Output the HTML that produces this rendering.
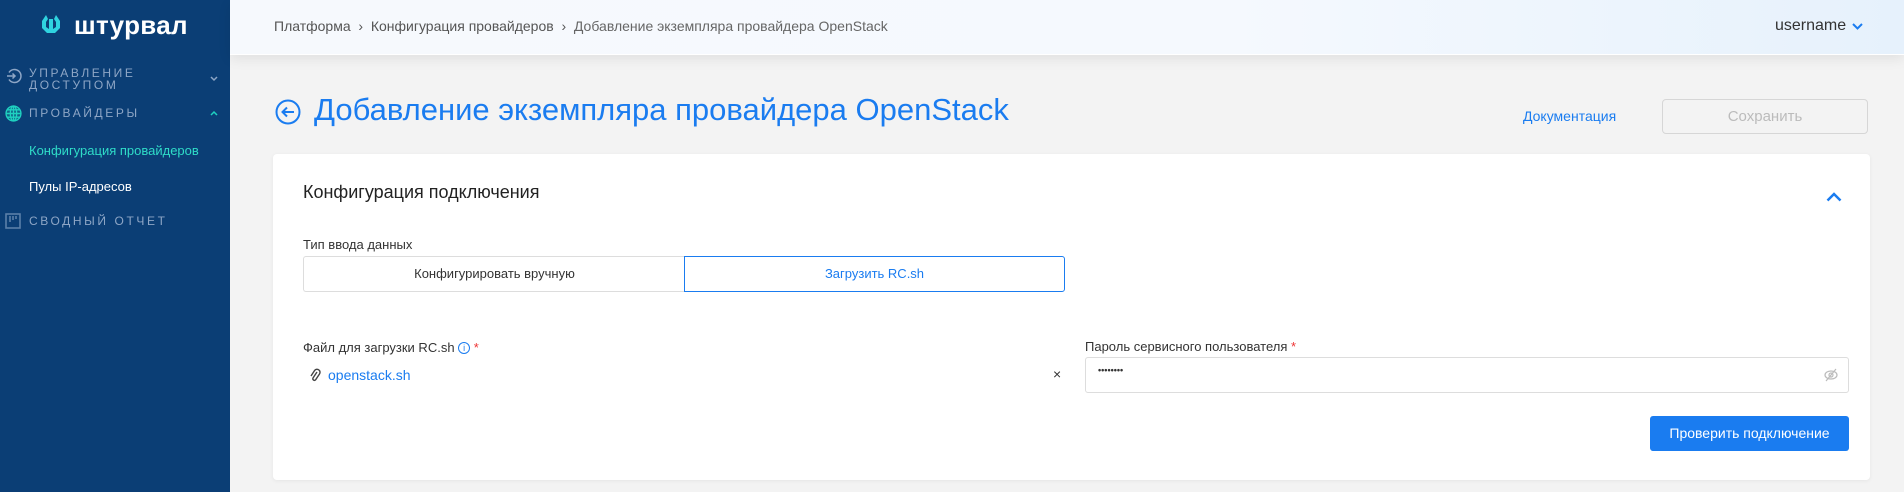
<!DOCTYPE html>
<html><head><meta charset="utf-8"><style>
*{box-sizing:border-box;margin:0;padding:0}
body{width:1904px;height:492px;overflow:hidden;background:#f3f3f3;font-family:"Liberation Sans",sans-serif;position:relative;color:#333}
.a{position:absolute;white-space:nowrap}
#sb{position:absolute;left:0;top:0;width:230px;height:492px;background:#0b3e75}
.cap{font-size:12px;letter-spacing:2.6px;color:#8ea6c6;line-height:13px}
#hd{position:absolute;left:230px;top:0;width:1674px;height:55px;background:linear-gradient(90deg,#f6f9fd,#f5f9fe 60%,#e6f1fc);border-bottom:1px solid #fff;box-shadow:0 4px 12px rgba(0,0,0,.08)}
.bc{font-size:14px;color:#555}
#card{position:absolute;left:273px;top:154px;width:1597px;height:326px;background:#fff;border-radius:4px;box-shadow:0 1px 4px rgba(0,0,0,.06)}
</style></head><body>
<div id="sb">
 <svg class="a" style="left:40px;top:13px" width="22" height="22" viewBox="0 0 22 22"><path d="M6 2 L2 8 L2 15 L7 20 L15 20 L20 15 L20 8 L16 2 L14 6 L16 9 L16 14 L13 16 L13 6 L9 6 L9 16 L6 14 L6 9 L8 6Z" fill="#2fd3e0"/></svg>
 <div class="a" style="left:74px;top:10px;font-size:26px;font-weight:bold;color:#fff;letter-spacing:0.3px">штурвал</div>
 <svg class="a" style="left:6px;top:68px" width="16" height="16" viewBox="0 0 16 16" fill="none" stroke="#8ea6c6" stroke-width="1.5"><path d="M3 4.5A6.5 6.5 0 1 1 3 11.5"/><path d="M1 8h8M6.5 5.5L9 8l-2.5 2.5"/></svg>
 <div class="a cap" style="left:29px;top:67px">УПРАВЛЕНИЕ</div>
 <div class="a cap" style="left:29px;top:79px">ДОСТУПОМ</div>
 <svg class="a" style="left:210px;top:76px" width="8" height="6" viewBox="0 0 8 6" fill="none" stroke="#8ea6c6" stroke-width="1.5"><path d="M1 1l3 3 3-3"/></svg>
 <svg class="a" style="left:5px;top:105px" width="17" height="17" viewBox="0 0 16 16" fill="none" stroke="#1fd1c0" stroke-width="1.3"><circle cx="8" cy="8" r="7" fill="#1fd1c0" fill-opacity=".25"/><ellipse cx="8" cy="8" rx="3" ry="7"/><path d="M1 8h14M2 4.5h12M2 11.5h12M8 1v14"/></svg>
 <div class="a cap" style="left:29px;top:107px">ПРОВАЙДЕРЫ</div>
 <svg class="a" style="left:210px;top:110px" width="8" height="6" viewBox="0 0 8 6" fill="none" stroke="#1fd1c0" stroke-width="1.5"><path d="M1 5l3-3 3 3"/></svg>
 <div class="a" style="left:29px;top:143px;font-size:13px;color:#2fdcc8">Конфигурация провайдеров</div>
 <div class="a" style="left:29px;top:179px;font-size:13px;color:#fff">Пулы IP-адресов</div>
 <svg class="a" style="left:5px;top:213px" width="16" height="16" viewBox="0 0 16 16" fill="none" stroke="#5b7fa8" stroke-width="1.6"><rect x="1" y="1" width="14" height="14"/><path d="M5 3v6M8 3v4M11 3v3"/></svg>
 <div class="a cap" style="left:29px;top:215px">СВОДНЫЙ ОТЧЕТ</div>
</div>
<div id="hd">
 <div class="a bc" style="left:44px;top:18px">Платформа &nbsp;›&nbsp; Конфигурация провайдеров &nbsp;›&nbsp; <span style="color:#666">Добавление экземпляра провайдера OpenStack</span></div>
 <div class="a" style="left:1545px;top:17px;font-size:16px;color:#333">username</div>
 <svg class="a" style="left:1622px;top:23px" width="11" height="7" viewBox="0 0 11 7" fill="none" stroke="#1a7cf0" stroke-width="2"><path d="M1 1l4.5 4.5L10 1"/></svg>
</div>
<svg class="a" style="left:275px;top:99px" width="26" height="26" viewBox="0 0 26 26" fill="none" stroke="#1a7cf0" stroke-width="2"><circle cx="13" cy="13" r="11.5"/><path d="M19 13H8M12 8.5L7.5 13 12 17.5"/></svg>
<div class="a" style="left:314px;top:92px;font-size:31px;color:#1a7cf0">Добавление экземпляра провайдера OpenStack</div>
<div class="a" style="left:1523px;top:108px;font-size:14px;color:#1a7cf0">Документация</div>
<div class="a" style="left:1662px;top:99px;width:206px;height:35px;border:1px solid #d6d6d6;border-radius:4px;font-size:15px;color:#bbb;text-align:center;line-height:33px">Сохранить</div>
<div id="card">
 <div class="a" style="left:30px;top:28px;font-size:18px;color:#222">Конфигурация подключения</div>
 <svg class="a" style="left:1553px;top:38px" width="16" height="10" viewBox="0 0 16 10" fill="none" stroke="#1a7cf0" stroke-width="2.5"><path d="M1.5 8.5L8 2l6.5 6.5"/></svg>
 <div class="a" style="left:30px;top:83px;font-size:13px;color:#333">Тип ввода данных</div>
 <div class="a" style="left:30px;top:102px;width:382px;height:36px;border:1px solid #ddd;border-right:none;border-radius:3px 0 0 3px;font-size:13px;text-align:center;line-height:34px;color:#333">Конфигурировать вручную</div>
 <div class="a" style="left:411px;top:102px;width:381px;height:36px;border:1px solid #1a7cf0;border-radius:0 3px 3px 0;font-size:13px;text-align:center;line-height:34px;color:#1a7cf0">Загрузить RC.sh</div>
 <div class="a" style="left:30px;top:186px;font-size:13px;color:#333">Файл для загрузки RC.sh <span style="display:inline-block;width:12px;height:12px;border:1.3px solid #1a7cf0;border-radius:50%;font-size:9px;color:#1a7cf0;text-align:center;line-height:10px;vertical-align:1px">i</span> <span style="color:#e33">*</span></div>
 <svg class="a" style="left:36px;top:214px" width="12" height="14" viewBox="0 0 12 14" fill="none" stroke="#444" stroke-width="1.4"><path d="M8 4L4 10a1.6 1.6 0 0 0 2.6 1.8L10.5 6A3 3 0 0 0 5.5 2.6L2 8"/></svg>
 <div class="a" style="left:55px;top:213px;font-size:14px;color:#1a7cf0">openstack.sh</div>
 <div class="a" style="left:780px;top:212px;font-size:14px;color:#333">×</div>
 <div class="a" style="left:812px;top:185px;font-size:13px;color:#333">Пароль сервисного пользователя <span style="color:#e33">*</span></div>
 <div class="a" style="left:812px;top:203px;width:764px;height:36px;border:1px solid #ddd;border-radius:3px"></div>
 <div class="a" style="left:825px;top:211px;font-size:9px;color:#333;letter-spacing:0;font-weight:bold">••••••••</div>
 <svg class="a" style="left:1551px;top:214px" width="14" height="14" viewBox="0 0 14 14" fill="none" stroke="#bbb" stroke-width="1.2"><ellipse cx="7" cy="7" rx="6" ry="4"/><circle cx="7" cy="7" r="2"/><path d="M2 13L12 1"/></svg>
 <div class="a" style="left:1377px;top:262px;width:199px;height:35px;background:#1a7cf0;border-radius:3px;color:#fff;font-size:14px;text-align:center;line-height:35px">Проверить подключение</div>
</div>
</body></html>
